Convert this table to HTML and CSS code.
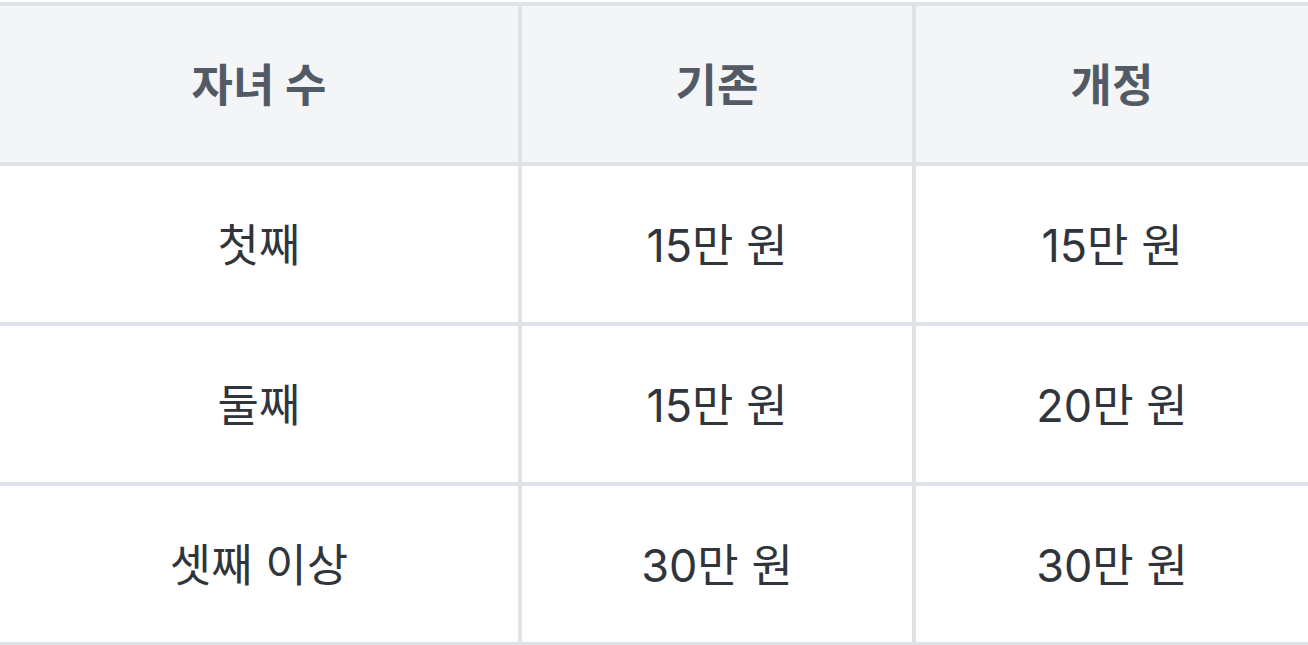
FILE: index.html
```html
<!DOCTYPE html>
<html lang="ko">
<head>
<meta charset="utf-8">
<link rel="stylesheet" href="styles.css">
</head>
<body>
<div class="page">
  <div class="table" role="table">
    <div class="cell head" role="columnheader">자녀 수</div>
    <div class="cell head" role="columnheader">기존</div>
    <div class="cell head" role="columnheader">개정</div>
    <div class="cell" role="cell">첫째</div>
    <div class="cell" role="cell">15만 원</div>
    <div class="cell" role="cell">15만 원</div>
    <div class="cell" role="cell">둘째</div>
    <div class="cell" role="cell">15만 원</div>
    <div class="cell" role="cell">20만 원</div>
    <div class="cell" role="cell">셋째 이상</div>
    <div class="cell" role="cell">30만 원</div>
    <div class="cell" role="cell">30만 원</div>
  </div>
</div>
</body>
</html>
```
FILE: styles.css
```css
html, body {
  margin: 0;
  padding: 0;
  background: #ffffff;
}
.page {
  padding-top: 2px;
}
.table {
  display: grid;
  grid-template-columns: 518px 390px 392px;
  grid-auto-rows: 156px;
  gap: 4px;
  padding: 4px 0;
  background: #dfe2e6;
  font-family: "Inter", "Noto Sans CJK KR", sans-serif;
  font-size: 45px;
}
.cell {
  display: flex;
  align-items: center;
  justify-content: center;
  padding-bottom: 4px;
  background: #ffffff;
  color: #30353c;
  font-weight: 400;
}
.cell.head {
  background: #f4f5f7;
  color: #525a66;
  font-weight: 700;
}
```
